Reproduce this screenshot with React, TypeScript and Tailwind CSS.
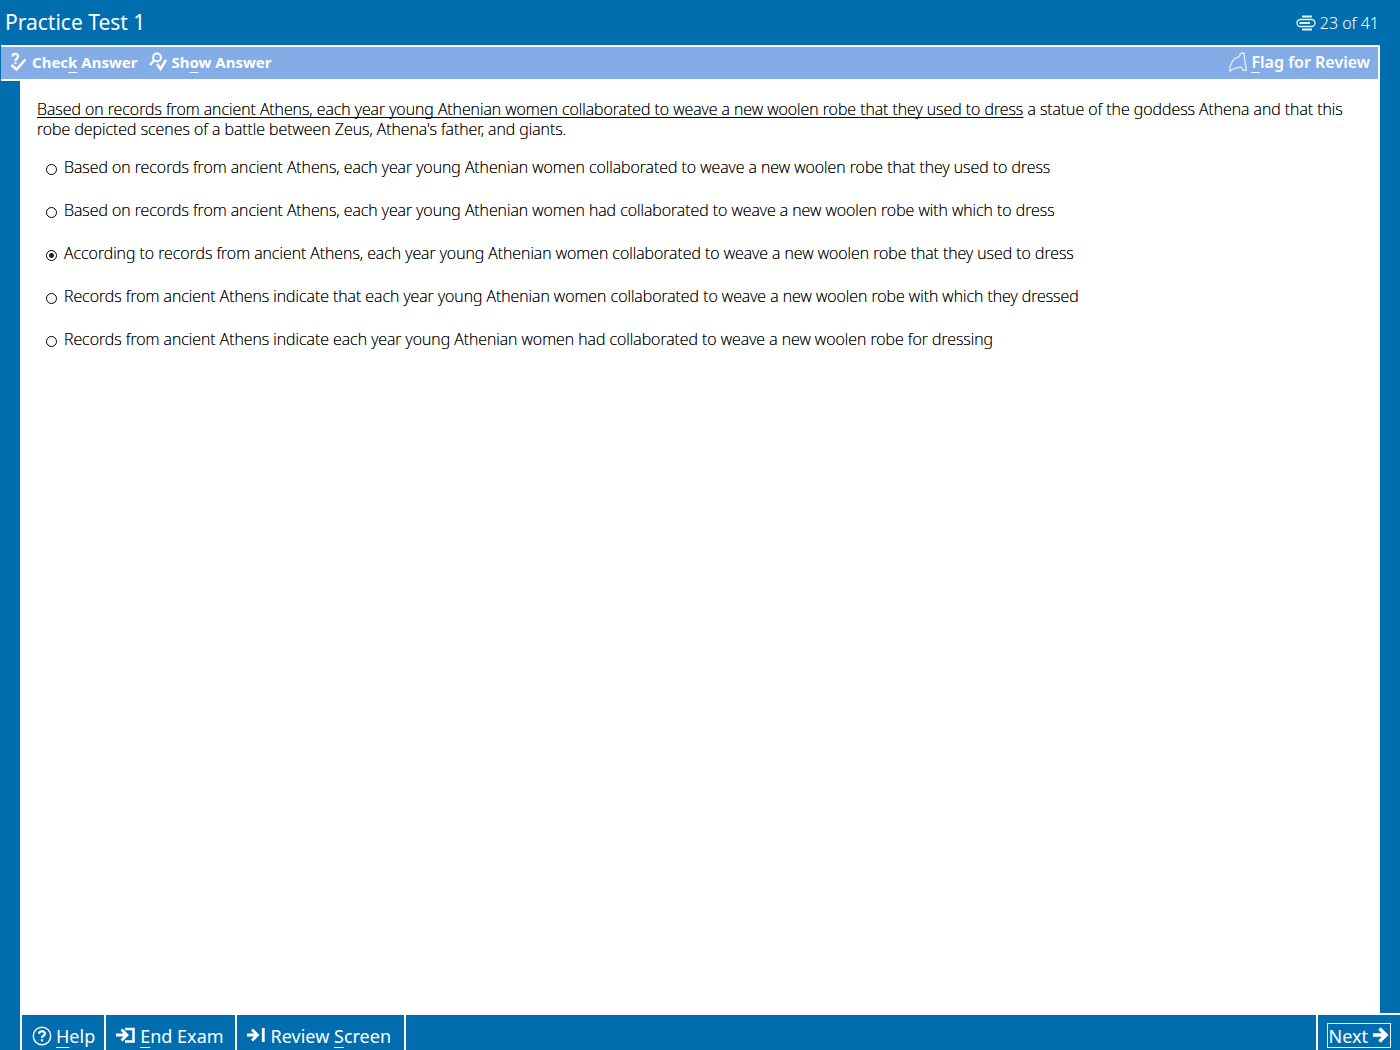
import { useState } from "react";

const stem = {
  underlined:
    "Based on records from ancient Athens, each year young Athenian women collaborated to weave a new woolen robe that they used to dress",
  rest: " a statue of the goddess Athena and that this robe depicted scenes of a battle between Zeus, Athena's father, and giants.",
};

const choices = [
  "Based on records from ancient Athens, each year young Athenian women collaborated to weave a new woolen robe that they used to dress",
  "Based on records from ancient Athens, each year young Athenian women had collaborated to weave a new woolen robe with which to dress",
  "According to records from ancient Athens, each year young Athenian women collaborated to weave a new woolen robe that they used to dress",
  "Records from ancient Athens indicate that each year young Athenian women collaborated to weave a new woolen robe with which they dressed",
  "Records from ancient Athens indicate each year young Athenian women had collaborated to weave a new woolen robe for dressing",
];

// label with its shortcut letter underlined
const Label = ({ text, hotkey }: { text: string; hotkey: string }) => {
  const at = text.indexOf(hotkey);
  return (
    <span className="whitespace-pre">
      {text.slice(0, at)}
      <span className="underline decoration-1 underline-offset-4 [text-decoration-skip-ink:none]">
        {hotkey}
      </span>
      {text.slice(at + 1)}
    </span>
  );
};

const CheckIcon = () => (
  <svg width="18" height="20" viewBox="0 0 18 20" fill="none" stroke="white">
    <path d="M2.5 4.5C2.5 1 8 1 8 4.2C8 6.8 5.5 6.4 5.5 9" strokeWidth="2.2" />
    <path d="M5.5 10.2V12.2" strokeWidth="2.2" />
    <path d="M1.5 13L6.5 17.5L15.5 7.5" strokeWidth="2.6" />
  </svg>
);

const ShowIcon = () => (
  <svg width="18" height="20" viewBox="0 0 18 20" fill="none" stroke="white">
    <circle cx="8" cy="5.5" r="3.9" strokeWidth="2" />
    <path d="M5.2 8.2L1 13" strokeWidth="2.2" />
    <path d="M8 12L11.5 17L17 8" strokeWidth="2.6" />
  </svg>
);

const FlagIcon = () => (
  <svg width="18" height="20" viewBox="0 0 18 20" fill="none" stroke="#e4f2ff">
    <path
      d="M1 19.3V14.5L3.5 9.5L5.5 6.5L10 4.8L11.8 1.5L15 1L15.5 6L17.3 18.3H14.5L12 15.2L7.3 15.9L3.3 17.5Z"
      strokeWidth="1.3"
      strokeLinejoin="round"
    />
  </svg>
);

const ProgressIcon = () => (
  <svg width="20" height="16" viewBox="0 0 20 16" fill="none" stroke="#dff6ff">
    <path d="M6 1.5H16M6 14.5H16" strokeWidth="2" />
    <rect x="1" y="4.5" width="18" height="7" rx="3.5" strokeWidth="1.3" />
    <path d="M3.5 8H14" strokeWidth="2" />
  </svg>
);

const HelpIcon = () => (
  <svg width="20" height="20" viewBox="0 0 20 20" fill="none" stroke="white">
    <circle cx="10" cy="10" r="8.7" strokeWidth="1.4" />
    <path d="M7 7.8C7 4.4 13 4.4 13 7.6C13 9.6 10 9.4 10 12" strokeWidth="2.2" />
    <path d="M10 13.2V15.4" strokeWidth="2.2" />
  </svg>
);

const EndIcon = () => (
  <svg width="20" height="18" viewBox="0 0 20 18" fill="none" stroke="white">
    <path d="M0 8H11M5.5 2.5L11 8L5.5 13.5" strokeWidth="2.8" />
    <path d="M9 2H17.5V14.5H9" strokeWidth="2.6" />
  </svg>
);

const ReviewIcon = () => (
  <svg width="20" height="18" viewBox="0 0 20 18" fill="none" stroke="white">
    <path d="M0 8H10M5 2.5L10.5 8L5 13.5" strokeWidth="2.8" />
    <path d="M16.3 1V15" strokeWidth="2.8" />
  </svg>
);

const NextIcon = () => (
  <svg width="16" height="18" viewBox="0 0 16 18" fill="none" stroke="white">
    <path d="M0 8H12.5M6.5 1.5L13 8L6.5 14.5" strokeWidth="3.4" />
  </svg>
);

export default function App() {
  const [selected, setSelected] = useState(2);

  return (
    <div className="flex min-h-screen flex-col bg-[#006eae] font-['Noto_Sans',sans-serif] text-white">
      <header className="flex h-[45px] items-center justify-between pr-[21px] pl-[5px]">
        <h1 className="text-[21px]">Practice Test 1</h1>
        <p className="flex items-center gap-1 text-base font-light">
          <ProgressIcon />
          23 of 41
        </p>
      </header>

      <nav className="mr-5 ml-px flex h-9 items-center justify-between border-y-2 border-r-2 border-white bg-[#84ade8] pr-2 pb-0.5 pl-[9px]">
        <div className="flex gap-3 text-[15px] font-bold">
          <button className="flex items-center gap-1">
            <CheckIcon />
            <Label text="Check Answer" hotkey="k" />
          </button>
          <button className="flex items-center gap-1">
            <ShowIcon />
            <Label text="Show Answer" hotkey="o" />
          </button>
        </div>
        <button className="flex items-center gap-1 text-base font-semibold">
          <FlagIcon />
          <Label text="Flag for Review" hotkey="F" />
        </button>
      </nav>

      <main className="mx-5 flex-1 bg-white px-[17px] pt-[18px] text-base leading-5 font-extralight text-black [text-shadow:0_0_0_black]">
        <p>
          <span className="underline decoration-1 underline-offset-2 [text-decoration-skip-ink:none]">
            {stem.underlined}
          </span>
          {stem.rest}
        </p>
        <fieldset className="mt-[18px] flex flex-col gap-[23px] pl-[9px]">
          {choices.map((choice, index) => (
            <label key={index} className="flex items-center gap-[7px]">
              <input
                type="radio"
                name="answer"
                checked={selected === index}
                onChange={() => setSelected(index)}
                className="mt-1 size-[11px] shrink-0 appearance-none rounded-full border border-black checked:bg-[radial-gradient(circle,#222_0_2px,white_3px)]"
              />
              {choice}
            </label>
          ))}
        </fieldset>
      </main>

      <footer className="ml-5 flex h-[37px] border-t-2 border-l-2 border-white text-lg">
        <button className="flex items-center gap-1 border-r-2 border-white pt-1.5 pr-[9px] pl-2.5">
          <HelpIcon />
          <Label text="Help" hotkey="H" />
        </button>
        <button className="flex items-center gap-1 border-r-2 border-white pt-1.5 pr-[11px] pl-2.5">
          <EndIcon />
          <Label text="End Exam" hotkey="E" />
        </button>
        <button className="flex items-center gap-1 border-r-2 border-white pt-1.5 pr-[13px] pl-2.5">
          <ReviewIcon />
          <Label text="Review Screen" hotkey="S" />
        </button>
        <button className="ml-auto flex items-start border-l-2 border-white px-[9px] pt-2">
          <span className="flex h-[25px] items-center gap-[5px] border border-white px-px">
            <Label text="Next" hotkey="N" />
            <NextIcon />
          </span>
        </button>
      </footer>
    </div>
  );
}
